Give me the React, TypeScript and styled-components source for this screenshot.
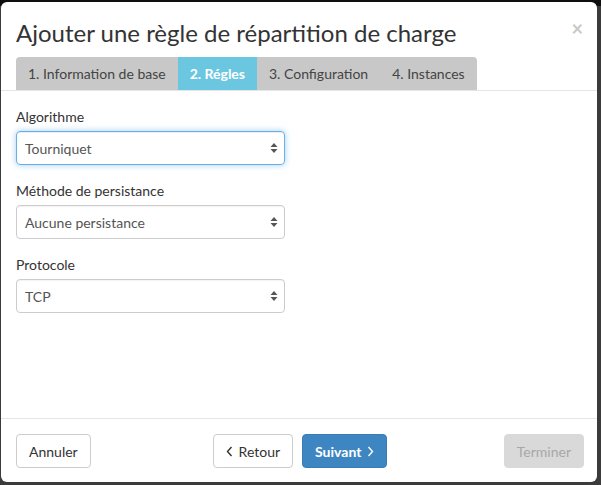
import styled, { createGlobalStyle } from 'styled-components';

const GlobalStyle = createGlobalStyle`
  html, body {
    margin: 0;
    padding: 0;
    background: #3b3b3b;
    font-family: 'Lato', 'Liberation Sans', sans-serif;
  }
  * {
    box-sizing: border-box;
  }
`;

const steps = ['1. Information de base', '2. Régles', '3. Configuration', '4. Instances'];

const fields = [
  { label: 'Algorithme', value: 'Tourniquet', focused: true },
  { label: 'Méthode de persistance', value: 'Aucune persistance', focused: false },
  { label: 'Protocole', value: 'TCP', focused: false },
];

const SelectArrows = () => (
  <svg width="8" height="12" viewBox="0 0 8 12">
    <path d="M4 1 L7.5 5 L0.5 5 Z" fill="#555" />
    <path d="M4 11 L7.5 7 L0.5 7 Z" fill="#555" />
  </svg>
);

const ChevronIcon = ({ dir }: { dir: 'left' | 'right' }) => (
  <svg width="7" height="11" viewBox="0 0 7 11">
    <path
      d={dir === 'left' ? 'M5.5 1 L1.5 5.5 L5.5 10' : 'M1.5 1 L5.5 5.5 L1.5 10'}
      fill="none"
      stroke="currentColor"
      strokeWidth="1.4"
    />
  </svg>
);

const App = () => {
  return (
    <>
      <GlobalStyle />
      <Backdrop>
        <Modal>
          <Header>
            <Title>Ajouter une règle de répartition de charge</Title>
            <Close>×</Close>
            <Tabs>
              {steps.map((step, i) => (
                <Tab key={step} $active={i === 1}>
                  {step}
                </Tab>
              ))}
            </Tabs>
          </Header>
          <Body>
            {fields.map((field) => (
              <Field key={field.label}>
                <Label>{field.label}</Label>
                <Select $focused={field.focused}>
                  <span>{field.value}</span>
                  <Arrows>
                    <SelectArrows />
                  </Arrows>
                </Select>
              </Field>
            ))}
          </Body>
          <Footer>
            <div>
              <Button>Annuler</Button>
            </div>
            <Nav>
              <Button>
                <ChevronIcon dir="left" /> Retour
              </Button>
              <Button $primary>
                Suivant <ChevronIcon dir="right" />
              </Button>
            </Nav>
            <Right>
              <Button $disabled>Terminer</Button>
            </Right>
          </Footer>
        </Modal>
      </Backdrop>
    </>
  );
};
export default App;

const Backdrop = styled.div`
  width: 601px;
  height: 485px;
  padding: 2px 4px 3px 1px;
  background: linear-gradient(#0e0e0e 0, #0e0e0e 6px, #3b3b3b 6px);
`;

const Modal = styled.div`
  width: 100%;
  height: 100%;
  background: #ffffff;
  border-radius: 6px;
  display: flex;
  flex-direction: column;
  overflow: hidden;
`;

const Header = styled.div`
  position: relative;
  padding: 15px 0 0 15px;
  border-bottom: 1px solid #e5e5e5;
`;

const Title = styled.h1`
  margin: 0;
  font-size: 24px;
  font-weight: 400;
  line-height: 32px;
  color: #333333;
`;

const Close = styled.span`
  position: absolute;
  top: 16px;
  right: 14px;
  font-size: 20px;
  font-weight: 700;
  line-height: 20px;
  color: #c9c9c9;
`;

const Tabs = styled.div`
  display: flex;
  width: fit-content;
  margin-top: 8px;
  background: #c8c8c8;
  border-radius: 4px 4px 0 0;
  overflow: hidden;
`;

const Tab = styled.div<{ $active?: boolean }>`
  padding: 0 12px;
  height: 33px;
  display: flex;
  align-items: center;
  font-size: 14px;
  color: ${(p) => (p.$active ? '#ffffff' : '#444444')};
  font-weight: ${(p) => (p.$active ? 700 : 400)};
  background: ${(p) => (p.$active ? '#6bc7e0' : 'transparent')};
`;

const Body = styled.div`
  flex: 1;
  padding: 16px 15px 0 15px;
  display: flex;
  flex-direction: column;
`;

const Field = styled.div`
  display: flex;
  flex-direction: column;
  margin-bottom: 16px;
`;

const Label = styled.label`
  font-size: 14px;
  line-height: 19px;
  color: #333333;
  margin-bottom: 5px;
`;

const Select = styled.div<{ $focused?: boolean }>`
  position: relative;
  width: 269px;
  height: 34px;
  display: flex;
  align-items: center;
  padding: 0 8px;
  font-size: 14px;
  color: #555555;
  border: 1px solid ${(p) => (p.$focused ? '#66afe9' : '#cccccc')};
  border-radius: 4px;
  box-shadow: ${(p) =>
    p.$focused
      ? 'inset 0 1px 1px rgba(0,0,0,.075), 0 0 6px rgba(102,175,233,.6)'
      : 'inset 0 1px 1px rgba(0,0,0,.05)'};
`;

const Arrows = styled.span`
  position: absolute;
  right: 6px;
  top: 10px;
  display: flex;
`;

const Footer = styled.div`
  border-top: 1px solid #e5e5e5;
  padding: 15px 13px 14px 15px;
  display: grid;
  grid-template-columns: 1fr auto 1fr;
  align-items: center;
`;

const Nav = styled.div`
  display: flex;
  gap: 9px;
`;

const Right = styled.div`
  display: flex;
  justify-content: flex-end;
`;

const Button = styled.button<{ $primary?: boolean; $disabled?: boolean }>`
  height: 34px;
  padding: 0 12px;
  font-family: 'Lato', 'Liberation Sans', sans-serif;
  font-size: 14px;
  font-weight: ${(p) => (p.$primary ? 700 : 400)};
  border-radius: 4px;
  border: 1px solid ${(p) => (p.$primary ? '#3a7db6' : p.$disabled ? '#d9d9d9' : '#cccccc')};
  background: ${(p) => (p.$primary ? '#3e86c2' : p.$disabled ? '#d9d9d9' : '#ffffff')};
  color: ${(p) => (p.$primary ? '#ffffff' : p.$disabled ? '#a8a8a8' : '#333333')};
  display: flex;
  align-items: center;
  gap: 6px;
`;
